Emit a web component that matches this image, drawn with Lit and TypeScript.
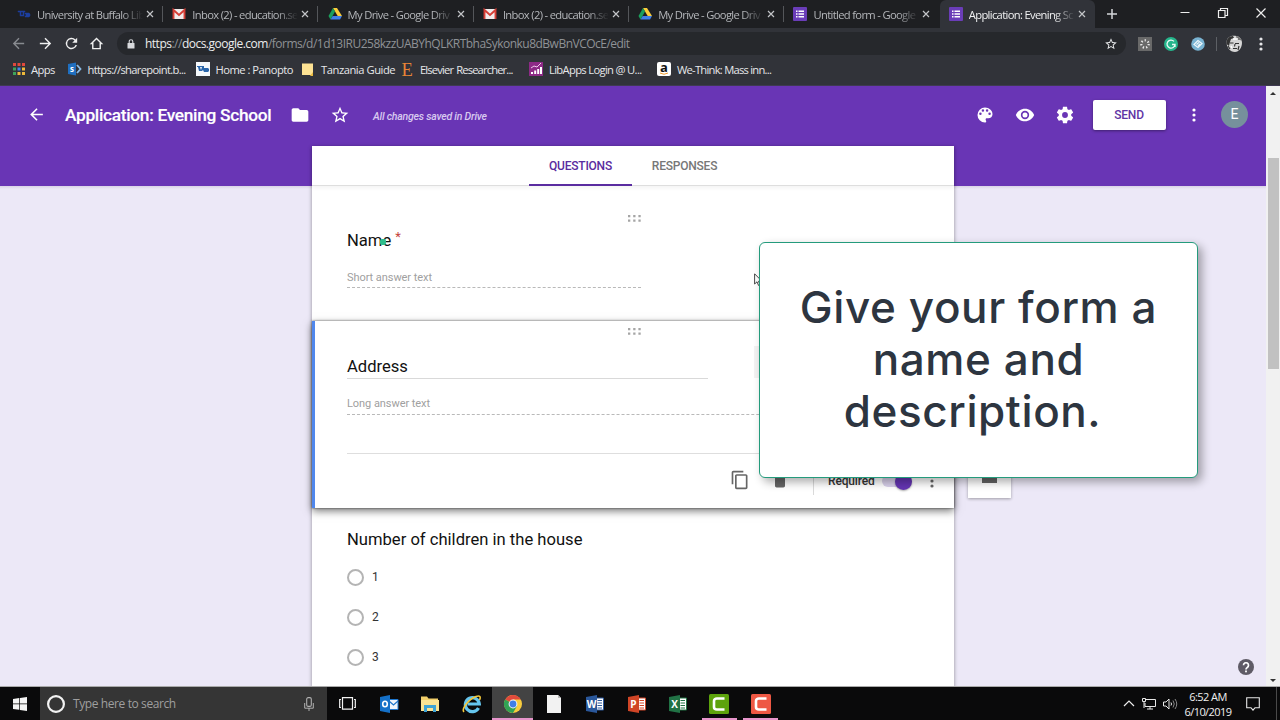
import { LitElement, html, svg, css } from "lit";
import { customElement } from "lit/decorators.js";

const ICONS: Record<string, any> = {
  ub: svg`<svg viewBox="0 0 14 14" width="14" height="14"><path d="M1 4h4v1H4v3h2V5H5V4h3v1H7v4H3V5H1zM8 6h4l1 1v2l-1 1H8V9h1V7H8z" fill="#1c3f9e" stroke="#1c3f9e" stroke-width="0.500"/></svg>`,
  gmail: svg`<svg viewBox="0 0 14 14" width="14" height="14"><rect x="1" y="2" width="12" height="10" rx="1" fill="#f1ecec"/><path d="M1.500 12V3L7 8l5.500-5v9" fill="none" stroke="#d63f37" stroke-width="1.900"/></svg>`,
  drive: svg`<svg viewBox="0 0 14 14" width="14" height="14"><path d="M5 1h4l5 8h-4.300z" fill="#fbcd3c"/><path d="M5 1L0.500 9l2 3.500L7 4.600z" fill="#1b9e5c"/><path d="M4.700 9H14l-2 3.500H2.500z" fill="#3f7fe8"/></svg>`,
  forms: svg`<svg viewBox="0 0 14 14" width="14" height="14"><rect width="14" height="14" rx="1" fill="#6a3db8"/><path d="M3 4.300h1.500M3 7h1.500M3 9.700h1.500M5.500 4.300H11M5.500 7H11M5.500 9.700H11" stroke="#fff" stroke-width="1.500"/></svg>`,
  close: svg`<svg viewBox="0 0 8 8" width="8" height="8"><path d="M1 1l6 6M7 1L1 7" stroke="#c3c5c8" stroke-width="1.200"/></svg>`,
  plus: svg`<svg viewBox="0 0 12 12" width="12" height="12"><path d="M6 1v10M1 6h10" stroke="#d4d6d9" stroke-width="1.500"/></svg>`,
  back: svg`<svg viewBox="0 0 24 24" width="17" height="17"><path d="M20 11H7.800l5.600-5.600L12 4l-8 8 8 8 1.400-1.400L7.800 13H20z" fill="currentColor"/></svg>`,
  reload: svg`<svg viewBox="0 0 24 24" width="17" height="17"><path d="M17.650 6.350A8 8 0 1 0 19.730 14h-2.080A6 6 0 1 1 12 6c1.660 0 3.140.69 4.220 1.780L13 11h7V4z" fill="#f0f0f0"/></svg>`,
  home: svg`<svg viewBox="0 0 14 14" width="13" height="13"><path d="M7 1.500L1.500 7H3v5.500h8V7h1.500z" fill="none" stroke="#f0f0f0" stroke-width="1.500"/></svg>`,
  lock: svg`<svg viewBox="0 0 8 10" width="8" height="10"><rect x="0.500" y="4" width="7" height="5.500" rx="0.500" fill="#d8dadd"/><path d="M2.200 4V2.500a1.800 1.800 0 0 1 3.600 0V4" fill="none" stroke="#d8dadd" stroke-width="1.100"/></svg>`,
  star: svg`<svg viewBox="0 0 24 24" width="14" height="14"><path d="M22 9.240l-7.190-.62L12 2 9.190 8.630 2 9.240l5.460 4.730L5.820 21 12 17.270 18.180 21l-1.630-7.030zM12 15.400l-3.760 2.270 1-4.280-3.320-2.880 4.380-.38L12 6.100l1.710 4.040 4.380.38-3.320 2.880 1 4.280z" fill="currentColor"/></svg>`,
  ext1: svg`<svg viewBox="0 0 14 14" width="14" height="14"><rect width="14" height="14" fill="#696969"/><circle cx="7" cy="7" r="3.700" fill="none" stroke="#e8e8e8" stroke-width="2.200" stroke-dasharray="1.300 2.020"/></svg>`,
  ext2: svg`<svg viewBox="0 0 14 14" width="14" height="14"><circle cx="7" cy="7" r="7" fill="#25b58b"/><path d="M10 4.400A4 4 0 1 0 11 7.500H8M11 7.500V10" fill="none" stroke="#eafaf5" stroke-width="1.300"/></svg>`,
  ext3: svg`<svg viewBox="0 0 14 14" width="14" height="14"><circle cx="7" cy="7" r="6.800" fill="#79b3d2"/><path d="M3 7.500l4-4 4 3-4 4zM5.500 7.500L8 5.400M7 8.800l2-2" fill="none" stroke="#eef7fb" stroke-width="1.200"/></svg>`,
  face: svg`<svg viewBox="0 0 18 18" width="18" height="18"><path d="M1.500 7C2 2 6 .5 10 .8c4 .2 7 3 7 7 0 5-3 9-7 9.200C5 17 1.500 12 1.500 7z" fill="#d6d6d6"/><path d="M1.500 9C1 4 4 1 8 1l1 2-3 1-1 3-1 4z" fill="#333"/><path d="M11 1c3 0 5 2 6 5l-2-1-3 0z" fill="#777"/><path d="M5 8h3.500M10 8.500h4M8 13.500h4M10 9l-.5 2.500M3 11l2 3M14 11l-1 4" stroke="#333" stroke-width="1.200"/><path d="M8 4h5M6 11l1 2" stroke="#fff" stroke-width="1.500"/></svg>`,
  dots: svg`<svg viewBox="0 0 4 16" width="4" height="16"><circle cx="2" cy="3" r="1.600" fill="currentColor"/><circle cx="2" cy="8" r="1.600" fill="currentColor"/><circle cx="2" cy="13" r="1.600" fill="currentColor"/></svg>`,
  min: svg`<svg viewBox="0 0 10 10" width="10" height="10"><path d="M0.500 4.500h9" stroke="#eee" stroke-width="1"/></svg>`,
  restore: svg`<svg viewBox="0 0 10 10" width="10" height="10"><path d="M0.500 2.500h6.500v7H0.500zM2.500 2.500V0.500h7v7H7" fill="none" stroke="#eee" stroke-width="1.200"/></svg>`,
  winclose: svg`<svg viewBox="0 0 10 10" width="10" height="10"><path d="M0.500 0.500l9 9M9.500 0.500l-9 9" stroke="#eee" stroke-width="1.200"/></svg>`,
  apps: svg`<svg viewBox="0 0 12 12" width="12" height="12"><path d="M0 0h3v3H0zM4.500 0h3v3h-3zM9 0h3v3H9z" fill="#e0483c"/><path d="M0 4.500h3v3H0z" fill="#3fa45b"/><path d="M4.500 4.500h3v3h-3z" fill="#4287e8"/><path d="M9 4.500h3v3H9zM4.500 9h3v3h-3zM9 9h3v3H9z" fill="#eeb93a"/><path d="M0 9h3v3H0z" fill="#3fa45b"/></svg>`,
  sharepoint: svg`<svg viewBox="0 0 14 14" width="14" height="14"><path d="M0 2l8-1.500v13L0 12z" fill="#1f6fc0"/><path d="M9 3l3.500 4L9 11" fill="none" stroke="#8bbce6" stroke-width="1.800"/><text x="2" y="9.500" font-size="8" font-weight="700" font-family="Open Sans" fill="#fff">s</text></svg>`,
  panopto: svg`<svg viewBox="0 0 14 14" width="14" height="14"><rect width="14" height="14" fill="#f5f8fb"/><path d="M1 4h4v1l-1 0 1 3 1-3-1 0V4h3v2h4l1 1v2l-1 1H8l-1-2-1 1H3L2 5H1z" fill="#2a66ab"/></svg>`,
  note: svg`<svg viewBox="0 0 11 13" width="11" height="13"><path d="M0 0.500h11v11.500H0z" fill="#fde293"/><path d="M11 9v4H8z" fill="#e8b93e"/></svg>`,
  elsevier: svg`<svg viewBox="0 0 12 15" width="12" height="15"><text x="0.500" y="13.500" font-size="18.500" font-family="Liberation Serif" fill="#e98536">E</text></svg>`,
  libapps: svg`<svg viewBox="0 0 14 14" width="14" height="14"><rect width="14" height="14" fill="#8d2a86"/><path d="M3 12V10M6.200 12V8.500M9.200 12V7M12 12V5" stroke="#fff" stroke-width="2"/><path d="M2 6l3-2 3 1 4-4" fill="none" stroke="#f0c8ec"/></svg>`,
  amazon: svg`<svg viewBox="0 0 14 14" width="14" height="14"><rect width="14" height="14" rx="2" fill="#fff"/><text x="3" y="9.500" font-size="13" font-weight="700" font-family="Open Sans" fill="#111">a</text><path d="M3 11q4 2.500 8 0" fill="none" stroke="#f19b2c"/></svg>`,
  folder: svg`<svg viewBox="0 0 24 24" width="20" height="20"><path d="M10 4H4c-1.100 0-2 .9-2 2v12c0 1.100.9 2 2 2h16c1.100 0 2-.9 2-2V8c0-1.100-.9-2-2-2h-8z" fill="#fff"/></svg>`,
  palette: svg`<svg viewBox="0 0 24 24" width="20" height="20"><path d="M12 3a9 9 0 0 0 0 18c.83 0 1.500-.67 1.500-1.500 0-.39-.15-.74-.39-1.010-.23-.26-.38-.61-.38-.99 0-.83.67-1.500 1.500-1.500H16c2.760 0 5-2.240 5-5 0-4.420-4.030-8-9-8zm-5.500 9a1.500 1.500 0 1 1 0-3 1.500 1.500 0 0 1 0 3zm3-4a1.500 1.500 0 1 1 0-3 1.500 1.500 0 0 1 0 3zm5 0a1.500 1.500 0 1 1 0-3 1.500 1.500 0 0 1 0 3zm3 4a1.500 1.500 0 1 1 0-3 1.500 1.500 0 0 1 0 3z" fill="#fff"/></svg>`,
  eye: svg`<svg viewBox="0 0 24 24" width="20" height="20"><path d="M12 4.500C7 4.500 2.730 7.610 1 12c1.730 4.390 6 7.500 11 7.500s9.270-3.110 11-7.500c-1.730-4.390-6-7.500-11-7.500zM12 17a5 5 0 1 1 0-10 5 5 0 0 1 0 10zm0-8a3 3 0 1 0 0 6 3 3 0 0 0 0-6z" fill="#fff"/></svg>`,
  gear: svg`<svg viewBox="0 0 24 24" width="20" height="20"><path d="M19.430 12.980c.04-.32.07-.64.07-.98s-.03-.66-.07-.98l2.110-1.650c.19-.15.24-.42.12-.64l-2-3.460c-.12-.22-.39-.3-.61-.22l-2.490 1c-.52-.4-1.080-.73-1.690-.98l-.38-2.650C14.460 2.180 14.250 2 14 2h-4c-.25 0-.46.18-.49.42l-.38 2.650c-.61.25-1.170.59-1.690.98l-2.490-1c-.23-.09-.49 0-.61.22l-2 3.460c-.13.22-.07.49.12.64l2.110 1.650c-.04.32-.07.65-.07.98s.03.66.07.98l-2.110 1.650c-.19.15-.24.42-.12.64l2 3.460c.12.22.39.3.61.22l2.490-1c.52.4 1.080.73 1.690.98l.38 2.650c.03.24.24.42.49.42h4c.25 0 .46-.18.49-.42l.38-2.650c.61-.25 1.170-.59 1.690-.98l2.490 1c.23.09.49 0 .61-.22l2-3.460c.12-.22.07-.49-.12-.64zM12 15.500a3.500 3.500 0 1 1 0-7 3.500 3.500 0 0 1 0 7z" fill="#fff"/></svg>`,
  grip: svg`<svg viewBox="0 0 13 7" width="13" height="7"><path d="M0 0h2.300v2.300H0zM5.200 0h2.300v2.300H5.200zM10.400 0h2.300v2.300h-2.300zM0 4.500h2.300v2.300H0zM5.200 4.500h2.300v2.300H5.200zM10.400 4.500h2.300v2.300h-2.300z" fill="#a5a5a5"/></svg>`,
  copy: svg`<svg viewBox="0 0 24 24" width="20" height="20"><path d="M16 1H4c-1.100 0-2 .9-2 2v14h2V3h12zm3 4H8c-1.100 0-2 .9-2 2v14c0 1.100.9 2 2 2h11c1.100 0 2-.9 2-2V7c0-1.100-.9-2-2-2zm0 16H8V7h11z" fill="#666"/></svg>`,
  trash: svg`<svg viewBox="0 0 24 24" width="20" height="20"><path d="M6 19c0 1.100.9 2 2 2h8c1.100 0 2-.9 2-2V7H6zM19 4h-3.500l-1-1h-5l-1 1H5v2h14z" fill="#666"/></svg>`,
  windows: svg`<svg viewBox="0 0 14 14" width="14" height="14"><path d="M0 2l6.300-.9v5.500H0zM7 1l7-1v6.600H7zM0 7.300h6.300v5.500L0 12zM7 7.300h7V14l-7-1z" fill="#f4f4f4"/></svg>`,
  cortana: svg`<svg viewBox="0 0 20 20" width="20" height="20"><circle cx="10" cy="10" r="7.900" fill="none" stroke="#f2f2f2" stroke-width="2.200"/></svg>`,
  mic: svg`<svg viewBox="0 0 10 14" width="10" height="14"><rect x="2.700" y="0.600" width="4.600" height="8.800" rx="1.500" fill="none" stroke="#b0b0b0" stroke-width="1.100"/><path d="M0.700 6v5.200h8.600V6M5 11v3" fill="none" stroke="#b0b0b0"/></svg>`,
  taskview: svg`<svg viewBox="0 0 17 13" width="17" height="13"><path d="M3.500 0.700h10v11.500h-10zM2 2.500H0.700v8H2M15 2.500h1.300v8H15" fill="none" stroke="#f2f2f2" stroke-width="1.200"/></svg>`,
  outlook: svg`<svg viewBox="0 0 20 18" width="20" height="18"><path d="M10 4.500h9v10h-9z" fill="#f0f6fc" stroke="#1e76cc"/><path d="M10 6l4.500 4L19 6" fill="none" stroke="#1e76cc" stroke-width="1.200"/><path d="M1 2l10-2v18L1 16z" fill="#1470c8"/><ellipse cx="6" cy="9" rx="2.300" ry="2.800" fill="none" stroke="#fff" stroke-width="1.600"/></svg>`,
  explorer: svg`<svg viewBox="0 0 20 18" width="20" height="18"><path d="M1 1.500h6l1.500 2H18V16H1z" fill="#f2cf6b"/><path d="M1 5h18v11H1z" fill="#fbe394"/><path d="M4 17v-7h12v7h-3v-4H7v4z" fill="#3ea3d6"/></svg>`,
  ie: svg`<svg viewBox="0 0 20 20" width="20" height="20"><path d="M16.500 14a7 7 0 1 1 .8-4H5.500" fill="none" stroke="#65c5ee" stroke-width="3.200"/><path d="M2 18C-1 15 7 5 14 2.500c4-1.500 5 .5 3.500 3.500" fill="none" stroke="#f4c83a" stroke-width="1.600"/></svg>`,
  chrome: svg`<svg viewBox="0 0 20 20" width="20" height="20"><circle cx="10" cy="10" r="9" fill="#f8cc3e"/><path d="M10 10L2.200 5.500A9 9 0 0 1 17.800 5.500H10z" fill="#e14a3c"/><path d="M10 10L2.200 5.500A9 9 0 0 0 10 19l4-7z" fill="#31a354"/><circle cx="10" cy="10" r="4.400" fill="#f7f7f7"/><circle cx="10" cy="10" r="3.400" fill="#3f7fe8"/></svg>`,
  file: svg`<svg viewBox="0 0 14 18" width="14" height="18"><path d="M0 0h11l3 3v15H0z" fill="#f2f2f2"/><path d="M11 0v3h3z" fill="#bbb"/></svg>`,
  camGreen: svg`<svg viewBox="0 0 20 20" width="20" height="20"><rect width="20" height="20" rx="1.500" fill="#5da30c"/><path d="M15.500 4.500H8Q5 4.500 5 7v6q0 2.500 3 2.500h7.500" fill="none" stroke="#fff" stroke-width="2.600"/></svg>`,
  camRed: svg`<svg viewBox="0 0 20 20" width="20" height="20"><rect width="20" height="20" rx="1.500" fill="#ee5844"/><path d="M15.500 4.500H8Q5 4.500 5 7v6q0 2.500 3 2.500h7.500" fill="none" stroke="#fff" stroke-width="2.600"/></svg>`,
  chevron: svg`<svg viewBox="0 0 12 7" width="12" height="7"><path d="M1 6l5-5 5 5" fill="none" stroke="#eee" stroke-width="1.200"/></svg>`,
  network: svg`<svg viewBox="0 0 14 12" width="14" height="12"><path d="M4 1.500h9.500v7H3V5M5 11h6M8 8.500V11M0.500 0.500h3v3h-3zM2 4v6" fill="none" stroke="#e8e8e8"/></svg>`,
  sound: svg`<svg viewBox="0 0 15 12" width="15" height="12"><path d="M0.500 4h2.500l3-3v10l-3-3H0.500z" fill="none" stroke="#e8e8e8"/><path d="M8 4.500q1 1.500 0 3" fill="none" stroke="#e8e8e8"/><path d="M10 2.500q2.500 3.500 0 7M12 1q3.500 5 0 10" fill="none" stroke="#888"/></svg>`,
  action: svg`<svg viewBox="0 0 14 14" width="14" height="14"><path d="M0.700 0.700h12.600v10H9l-2 2.500-2-2.500H0.700z" fill="none" stroke="#e8e8e8" stroke-width="1.100"/></svg>`,
  help: svg`<svg viewBox="0 0 16 16" width="16" height="16"><circle cx="8" cy="8" r="8" fill="#5f5b66"/><path d="M5.500 6.200a2.500 2.500 0 1 1 3.800 2.200Q8 9.200 8 10.400" fill="none" stroke="#fff" stroke-width="1.700"/><rect x="7.100" y="11.500" width="1.800" height="1.800" fill="#fff"/></svg>`,
  pointer: svg`<svg viewBox="0 0 9 13" width="9" height="13"><path d="M0.600 0.800v10.200l2.400-2.200 1.600 3.700 1.500-.7-1.600-3.500H8z" fill="#fff" stroke="#333" stroke-width="0.900"/></svg>`,
};

const office = (letter: string, color: string) => svg`<svg viewBox="0 0 18 18" width="18" height="18">
  <path d="M10 3h7.500v12H10z" fill="#fff" stroke=${color}/>
  <path d="M11.500 5.500h4.500M11.500 8h4.500M11.500 10.500h4.500M11.500 13h4.500" stroke=${color}/>
  <path d="M0 2l11-2v18L0 16z" fill=${color}/>
  <text x="5.500" y="12.500" text-anchor="middle" font-size="10" font-weight="700" font-family="Open Sans" fill="#fff">${letter}</text></svg>`;

const TABS = [
  ["ub", "University at Buffalo Lib"],
  ["gmail", "Inbox (2) - education.se"],
  ["drive", "My Drive - Google Driv"],
  ["gmail", "Inbox (2) - education.se"],
  ["drive", "My Drive - Google Driv"],
  ["forms", "Untitled form - Google"],
  ["forms", "Application: Evening Sc"],
];

@customElement("browser-chrome")
class BrowserChrome extends LitElement {
  static styles = css`
    :host { display: block; height: 86px; background: #313339; color: #e6e7e9; font-family: "Open Sans", "Noto Sans", sans-serif; box-shadow: inset 0 -1px #3f3a52; }
    svg { display: block; flex: none; overflow: visible; }
    .tabs { display: flex; height: 28px; background: #1e1f22; padding-left: 8px; }
    .tab { flex: none; display: flex; align-items: center; box-sizing: border-box; width: 155.300px; padding-left: 9px; color: #b4b6ba; }
    .tab:not(.active):not(.before)::after { content: ""; flex: none; width: 1px; height: 16px; background: #54565a; margin-left: 8px; }
    .tab.active { background: #313339; border-radius: 6px 6px 0 0; color: #f0f1f2; }
    .label { flex: none; width: 106px; margin: 0 3px 0 6px; white-space: nowrap; font-size: 11.200px; letter-spacing: -0.660px; -webkit-mask-image: linear-gradient(90deg, #000 80%, transparent 100%); mask-image: linear-gradient(90deg, #000 80%, transparent 100%); }
    .new { display: flex; align-items: center; margin-left: 11px; }
    .win { display: flex; align-items: center; gap: 28px; margin-left: auto; padding: 0 14px 3px 0; }
    .bar { display: flex; align-items: center; height: 31px; }
    .nav { display: flex; align-items: center; color: #f0f1f2; width: 117px; box-sizing: border-box; padding-left: 10px; gap: 9.500px; }
    .dim { color: #888b90; }
    .flip { transform: scaleX(-1); }
    .omni { display: flex; align-items: center; width: 1009px; height: 23px; box-sizing: border-box; border-radius: 12px; background: #26282c; padding: 0 8px 0 10px; }
    .url { margin-left: 10px; font-size: 12px; letter-spacing: -0.510px; color: #8f9296; white-space: nowrap; flex: 1; }
    .url b { font-weight: 400; color: #eceded; }
    .tools { display: flex; align-items: center; margin-left: 11.500px; gap: 12.600px; }
    .rule { width: 1px; height: 14px; background: #5d6065; margin: 0 -5px 0 -1px; }
    .kebab { margin-left: 4px; }
    .marks { display: flex; align-items: center; height: 20px; font-size: 11.200px; letter-spacing: -0.660px; }
    .mark { display: flex; align-items: center; flex: none; white-space: nowrap; box-sizing: border-box; gap: 6px; }
    .m0 { width: 54.500px; margin-left: 13px; letter-spacing: -0.560px; } .m1 { width: 128px; } .m2 { width: 106.500px; letter-spacing: -0.500px; } .m3 { width: 99px; gap: 8px; letter-spacing: -0.450px; } .m4 { width: 128px; gap: 7px; letter-spacing: -0.850px; } .m5 { width: 128px; } .m6 { width: 130px; letter-spacing: -0.750px; }
    .m4 span { word-spacing: 1px; }
  `;
  render() {
    const marks = [["apps", "Apps"], ["sharepoint", "https://sharepoint.b..."], ["panopto", "Home : Panopto"], ["note", "Tanzania Guide"], ["elsevier", "Elsevier Researcher..."], ["libapps", "LibApps Login @ U..."], ["amazon", "We-Think: Mass inn..."]];
    return html`
      <div class="tabs">
        ${TABS.map(([icon, label], i) => html`<div class="tab ${i === 6 ? "active" : i === 5 ? "before" : ""}">${ICONS[icon]}<span class="label">${label}</span>${ICONS.close}</div>`)}
        <div class="new">${ICONS.plus}</div>
        <div class="win">${ICONS.min}${ICONS.restore}${ICONS.winclose}</div>
      </div>
      <div class="bar">
        <div class="nav"><span class="dim">${ICONS.back}</span><span class="flip">${ICONS.back}</span>${ICONS.reload}${ICONS.home}</div>
        <div class="omni">${ICONS.lock}<span class="url"><b>https</b>://<b>docs.google.com</b>/forms/d/1d13IRU258kzzUABYhQLKRTbhaSykonku8dBwBnVCOcE/edit</span>${ICONS.star}</div>
        <div class="tools">${ICONS.ext1}${ICONS.ext2}${ICONS.ext3}<span class="rule"></span>${ICONS.face}<span class="kebab">${ICONS.dots}</span></div>
      </div>
      <div class="marks">${marks.map(([icon, label], i) => html`<div class="mark m${i}">${ICONS[icon]}<span>${label}</span></div>`)}</div>
    `;
  }
}

@customElement("form-editor")
class FormEditor extends LitElement {
  static styles = css`
    :host { display: flex; height: 601px; overflow: hidden; font-family: Roboto, sans-serif; color: #111; background: #f1f1f1; }
    svg { display: block; flex: none; }
    .page { width: 1266px; background: linear-gradient(#6935b5 0 100px, #d9d3e6 100px, #ece8f7 103px); }
    .head { display: flex; align-items: center; height: 60px; box-sizing: border-box; padding: 0 18px 3px 26px; color: #fff; }
    .arrow { transform: scale(1.120); margin: 0 20.500px 0 1.500px; }
    .title { font-size: 17.300px; letter-spacing: -0.300px; font-weight: 500; width: 225px; white-space: nowrap; -webkit-text-stroke: 0.150px #fff; }
    .fav { margin: 0 23px 0 20px; }
    .fav svg { width: 20px; height: 20px; }
    .saved { font-size: 10.500px; letter-spacing: -0.210px; font-style: italic; font-weight: 500; color: #d8c9f0; white-space: nowrap; margin-top: 3px; }
    .actions { display: flex; align-items: center; gap: 20px; margin-left: auto; }
    .send { width: 73px; height: 30px; line-height: 30px; border-radius: 2px; background: #fff; color: #5f35a5; font-size: 12px; letter-spacing: -0.200px; font-weight: 500; text-align: center; box-shadow: 0 1px 3px #0006; margin-left: -2px; }
    .more { margin: 0 4.500px 0 6px; }
    .avatar { width: 27px; height: 27px; border-radius: 50%; background: #76909c; font-size: 14px; line-height: 27px; text-align: center; margin-left: 1px; }
    .body { display: flex; padding-left: 312px; }
    .sheet { width: 642px; height: 541px; background: #fff; box-shadow: 0 1px 4px #0006; }
    .switch { display: flex; height: 40px; box-sizing: border-box; padding-left: 217px; border-bottom: 1px solid #dedede; box-shadow: 0 2px 4px #0000000d; font-size: 12px; letter-spacing: -0.220px; font-weight: 500; color: #777; line-height: 40px; text-align: center; }
    .switch span { width: 105px; box-sizing: border-box; height: 40px; }
    .switch .on { width: 103px; color: #5a2ca0; border-bottom: 2px solid #5a2ca0; }
    .q { box-sizing: border-box; padding: 0 35px; }
    .name { height: 135px; padding-top: 29px; }
    .grip { display: flex; justify-content: center; padding-left: 2px; height: 7px; }
    .label { font-size: 16.600px; line-height: 20px; white-space: nowrap; }
    .name .label { margin-top: 9px; }
    .label sup { color: #c5433c; font-size: 13px; line-height: 0; vertical-align: 5px; margin-left: 4px; }
    .hint { color: #a0a0a0; font-size: 11px; letter-spacing: -0.060px; line-height: 16px; border-bottom: 1px dashed #b9b9b9; }
    .name .hint { width: 294px; margin-top: 19px; height: 17px; }
    .address { position: relative; height: 187px; background: #fff; border-left: 3px solid #5087ec; padding: 7px 30px 0 32px; box-shadow: 0 0 2px #0009, 0 3px 8px #0008; }
    .address .grip { padding: 0 3px 0 0; }
    .address .label { width: 361px; height: 21px; border-bottom: 1px solid #d9d9d9; margin-top: 22px; }
    .address .row { display: flex; justify-content: space-between; height: 44px; }
    .type { width: 170px; height: 32px; background: #f3f3f3; margin-top: 11px; }
    .address .hint { margin-top: 17px; height: 18px; }
    .foot { display: flex; align-items: center; height: 51px; border-top: 1px solid #dedede; margin-top: 38px; padding-left: 383px; }
    .foot > * { flex: none; }
    .bin { margin-left: 20px; }
    .sep { width: 1px; height: 30px; background: #dadada; margin: 0 14px 0 23px; }
    .req { font-size: 12px; letter-spacing: -0.150px; font-weight: 500; color: #333; width: 54px; padding-top: 2px; }
    .toggle { display: flex; justify-content: flex-end; align-items: center; width: 30px; height: 12px; border-radius: 6px; background: #d8d0ea; margin-top: 3px; }
    .knob { width: 17px; height: 17px; flex: none; border-radius: 50%; background: #6434b2; box-shadow: 0 1px 2px #0005; }
    .kebab { color: #666; margin: 2px 0 0 18px; }
    .children { padding-top: 22px; }
    .opt { display: flex; align-items: center; gap: 8px; height: 40px; font-size: 12px; color: #333; }
    .opt i { box-sizing: border-box; width: 17px; height: 17px; border: 2px solid #b4b4b4; border-radius: 50%; }
    .children .opts { padding-top: 7px; }
    .side { display: flex; align-items: flex-end; justify-content: center; width: 43px; height: 200px; margin: 152px 0 0 14px; background: #fff; box-shadow: 0 1px 3px #0005; box-sizing: border-box; padding-bottom: 15px; }
    .side i { width: 15px; height: 12px; background: #646464; }
    .scroll { width: 14px; display: flex; flex-direction: column; align-items: center; }
    .scroll .up { border: 3px solid transparent; border-top: 0; border-bottom-color: #333; margin-top: 6px; }
    .scroll .thumb { width: 11px; height: 211px; background: #c1c1c1; margin-top: 63px; margin-left: 1px; }
    .scroll .down { border: 3px solid transparent; border-bottom: 0; border-top-color: #333; margin-top: auto; margin-bottom: 5px; }
  `;
  render() {
    return html`
      <div class="page">
        <div class="head">
          <span class="arrow">${ICONS.back}</span><span class="title">Application: Evening School</span>${ICONS.folder}
          <span class="fav">${ICONS.star}</span><span class="saved">All changes saved in Drive</span>
          <div class="actions">${ICONS.palette}${ICONS.eye}${ICONS.gear}<span class="send">SEND</span><span class="more">${ICONS.dots}</span><span class="avatar">E</span></div>
        </div>
        <div class="body">
          <div class="sheet">
            <div class="switch"><span class="on">QUESTIONS</span><span>RESPONSES</span></div>
            <div class="q name"><div class="grip">${ICONS.grip}</div><div class="label">Name<sup>*</sup></div><div class="hint">Short answer text</div></div>
            <div class="q address">
              <div class="grip">${ICONS.grip}</div>
              <div class="row"><div class="label">Address</div><div class="type"></div></div>
              <div class="hint">Long answer text</div>
              <div class="foot">${ICONS.copy}<span class="bin">${ICONS.trash}</span><span class="sep"></span><span class="req">Required</span><span class="toggle"><i class="knob"></i></span><span class="kebab">${ICONS.dots}</span></div>
            </div>
            <div class="q children"><div class="label">Number of children in the house</div>
              <div class="opts">${[1, 2, 3].map((n) => html`<div class="opt"><i></i><span>${n}</span></div>`)}</div></div>
          </div>
          <div class="side"><i></i></div>
        </div>
      </div>
      <div class="scroll"><i class="up"></i><i class="thumb"></i><i class="down"></i></div>
    `;
  }
}

@customElement("task-bar")
class TaskBar extends LitElement {
  static styles = css`
    :host { display: flex; height: 33px; background: #0a0a0b; color: #f0f0f0; font-family: "Open Sans", "Noto Sans", sans-serif; box-shadow: 0 -1px #aaa; position: relative; }
    svg { display: block; flex: none; }
    .start { display: flex; align-items: center; justify-content: center; width: 40px; }
    .search { display: flex; align-items: center; width: 287px; box-sizing: border-box; padding: 0 13px 0 6px; background: #353535; color: #9f9f9f; font-size: 12px; letter-spacing: -0.400px; }
    .search span { flex: 1; margin-left: 7px; white-space: nowrap; }
    .app { position: relative; display: flex; align-items: center; justify-content: center; width: 41.300px; box-sizing: border-box; }
    .active { background: #434343; }
    .open::after { content: ""; position: absolute; left: 3px; right: 3px; bottom: 0; height: 2px; background: #e795cb; }
    .active::after { left: 0; right: 0; }
    .tray { display: flex; align-items: center; margin-left: auto; padding-right: 3px; gap: 7px; }
    .clock { width: 58px; text-align: center; font-size: 11px; line-height: 15px; letter-spacing: -0.550px; white-space: nowrap; margin-left: -6px; }
    .note { margin: 0 9px 0 2px; }
    .peek { width: 1px; height: 33px; background: #4a4a4a; }
  `;
  render() {
    const apps = [ICONS.outlook, ICONS.explorer, ICONS.ie, ICONS.chrome, ICONS.file, office("W", "#2a579a"), office("P", "#d04526"), office("X", "#217245"), ICONS.camGreen, ICONS.camRed];
    return html`
      <div class="start">${ICONS.windows}</div>
      <div class="search">${ICONS.cortana}<span>Type here to search</span>${ICONS.mic}</div>
      <div class="app">${ICONS.taskview}</div>
      ${apps.map((icon, i) => html`<div class="app ${i === 3 ? "active open" : i > 7 ? "open" : ""}">${icon}</div>`)}
      <div class="tray">${ICONS.chevron}${ICONS.network}${ICONS.sound}<div class="clock">6:52 AM<br>6/10/2019</div><span class="note">${ICONS.action}</span><i class="peek"></i></div>
    `;
  }
}

@customElement("app-root")
class AppRoot extends LitElement {
  static styles = css`
    :host { display: block; position: relative; width: 1280px; height: 720px; overflow: hidden; }
    svg { display: block; }
    .pointer { position: absolute; left: 754px; top: 273px; }
    .spot { position: absolute; left: 380px; top: 239px; width: 6px; height: 6px; border-radius: 2px; background: #2fbd8b; }
    .help { position: absolute; left: 1238px; top: 659px; }
    .callout { position: absolute; left: 759px; top: 242px; width: 439px; height: 236px; box-sizing: border-box; border: 1.500px solid #249b7c; border-radius: 6px; background: #fff; box-shadow: 4px 4px 10px #0005; display: flex; flex-direction: column; align-items: center; padding-top: 38px; color: #2d3540; font-family: Inter, sans-serif; font-size: 44px; font-weight: 500; letter-spacing: 0.600px; line-height: 52px; white-space: nowrap; }
    .last { padding-right: 12px; }
  `;
  render() {
    return html`
      <browser-chrome></browser-chrome>
      <form-editor></form-editor>
      <task-bar></task-bar>
      <i class="spot"></i>
      <div class="pointer">${ICONS.pointer}</div>
      <div class="help">${ICONS.help}</div>
      <div class="callout"><span>Give your form a</span><span>name and</span><span class="last">description.</span></div>
    `;
  }
}
